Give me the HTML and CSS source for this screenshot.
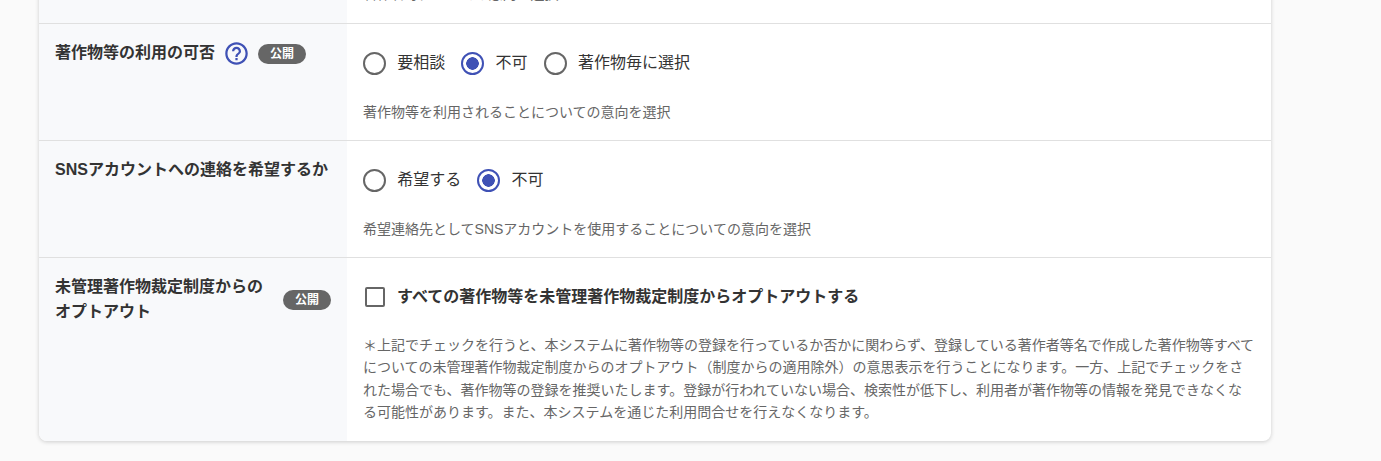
FILE: index.html
```html
<!DOCTYPE html>
<html lang="ja">
<head>
  <meta charset="UTF-8">
  <title>著作物等の利用設定</title>
  <link rel="stylesheet" href="styles.css">
</head>
<body>
  <div class="card">

    <!-- row cut off by the top of the window -->
    <div class="row row-top">
      <div class="label-cell"></div>
      <div class="field-cell">
        <p class="hint">著作者等についての意向を選択</p>
      </div>
    </div>

    <div class="row">
      <div class="label-cell">
        <span class="label-text">著作物等の利用の可否</span>
        <svg class="help-icon" viewBox="0 0 24 24" width="27" height="27">
          <path fill="#3f51b5" d="M11 18h2v-2h-2v2zm1-16C6.48 2 2 6.48 2 12s4.480 10 10 10 10-4.480 10-10S17.520 2 12 2zm0 18c-4.410 0-8-3.590-8-8s3.590-8 8-8 8 3.590 8 8-3.590 8-8 8zm0-14c-2.210 0-4 1.790-4 4h2c0-1.100.9-2 2-2s2 .9 2 2c0 2-3 1.750-3 5h2c0-2.250 3-2.500 3-5 0-2.210-1.790-4-4-4z"/>
        </svg>
        <span class="badge">公開</span>
      </div>
      <div class="field-cell">
        <div class="options">
          <label class="radio"><span class="radio-mark"></span>要相談</label>
          <label class="radio checked"><span class="radio-mark"></span>不可</label>
          <label class="radio"><span class="radio-mark"></span>著作物毎に選択</label>
        </div>
        <p class="hint">著作物等を利用されることについての意向を選択</p>
      </div>
    </div>

    <div class="row">
      <div class="label-cell">
        <span class="label-text">SNSアカウントへの連絡を希望するか</span>
      </div>
      <div class="field-cell">
        <div class="options">
          <label class="radio"><span class="radio-mark"></span>希望する</label>
          <label class="radio checked"><span class="radio-mark"></span>不可</label>
        </div>
        <p class="hint">希望連絡先としてSNSアカウントを使用することについての意向を選択</p>
      </div>
    </div>

    <div class="row">
      <div class="label-cell label-between">
        <span class="label-text">未管理著作物裁定制度からの<br>オプトアウト</span>
        <span class="badge">公開</span>
      </div>
      <div class="field-cell">
        <div class="options">
          <label class="check"><span class="check-mark"></span>すべての著作物等を未管理著作物裁定制度からオプトアウトする</label>
        </div>
        <p class="hint hint-long">＊上記でチェックを行うと、本システムに著作物等の登録を行っているか否かに関わらず、登録している著作者等名で作成した著作物等すべてについての未管理著作物裁定制度からのオプトアウト（制度からの適用除外）の意思表示を行うことになります。一方、上記でチェックをされた場合でも、著作物等の登録を推奨いたします。登録が行われていない場合、検索性が低下し、利用者が著作物等の情報を発見できなくなる可能性があります。また、本システムを通じた利用問合せを行えなくなります。</p>
      </div>
    </div>

  </div>
</body>
</html>
```

FILE: styles.css
```css
html, body {
  margin: 0;
  padding: 0;
  height: 100%;
  overflow: hidden;
  background: #fafafa;
  font-family: 'Liberation Sans', 'Noto Sans CJK JP', sans-serif;
  color: #333;
}

.card {
  width: 1232px;
  margin: -100px 0 0 39px;
  background: #fff;
  border-radius: 0 0 8px 8px;
  box-shadow: 0 1px 4px rgba(0, 0, 0, 0.18);
  overflow: hidden;
}

.row {
  display: flex;
  height: 116px;
  border-top: 1px solid #e0e0e0;
}

.row:last-child {
  height: 183px;
}

.row-top {
  height: 123px;
  border-top: none;
  align-items: stretch;
}

.row-top .field-cell {
  display: flex;
  align-items: flex-end;
  padding-top: 0;
}

.row-top .hint {
  margin-bottom: 18px;
}

.label-cell {
  box-sizing: border-box;
  width: 308px;
  flex-shrink: 0;
  display: flex;
  align-items: flex-start;
  padding: 16px 16px 0;
  background: #f8f9fb;
}

.label-between {
  justify-content: space-between;
}

.label-text {
  font-size: 16px;
  font-weight: 700;
  line-height: 25px;
}

.help-icon {
  margin: 0 0 0 8px;
}

.badge {
  box-sizing: border-box;
  width: 48px;
  height: 20px;
  margin: 4px 0 0 8px;
  border-radius: 10px;
  background: #666;
  color: #fff;
  font-size: 12px;
  font-weight: 700;
  line-height: 20px;
  text-align: center;
}

.label-between .badge {
  margin-top: 16px;
}

.field-cell {
  flex: 1;
  padding: 23px 16px 0;
}

.options {
  display: flex;
  align-items: center;
  gap: 16px;
  height: 32px;
}

.radio, .check {
  display: flex;
  align-items: center;
  font-size: 16px;
  line-height: 24px;
}

.radio-mark {
  box-sizing: border-box;
  width: 23px;
  height: 23px;
  margin-right: 11.3px;
  border: 2px solid #666;
  border-radius: 50%;
}

.radio.checked .radio-mark {
  border-color: #3f51b5;
  background: radial-gradient(circle, #3f51b5 0, #3f51b5 6px, #fff 6.5px);
}

.check {
  font-weight: 700;
}

.check-mark {
  box-sizing: border-box;
  width: 20px;
  height: 20px;
  margin: 0 12px 0 2px;
  border: 2px solid #666;
  border-radius: 2px;
}

.hint {
  margin: 22px 0 0;
  font-size: 14px;
  line-height: 22.4px;
  color: #666;
}

.hint-long {
  margin-top: 21px;
}
```
